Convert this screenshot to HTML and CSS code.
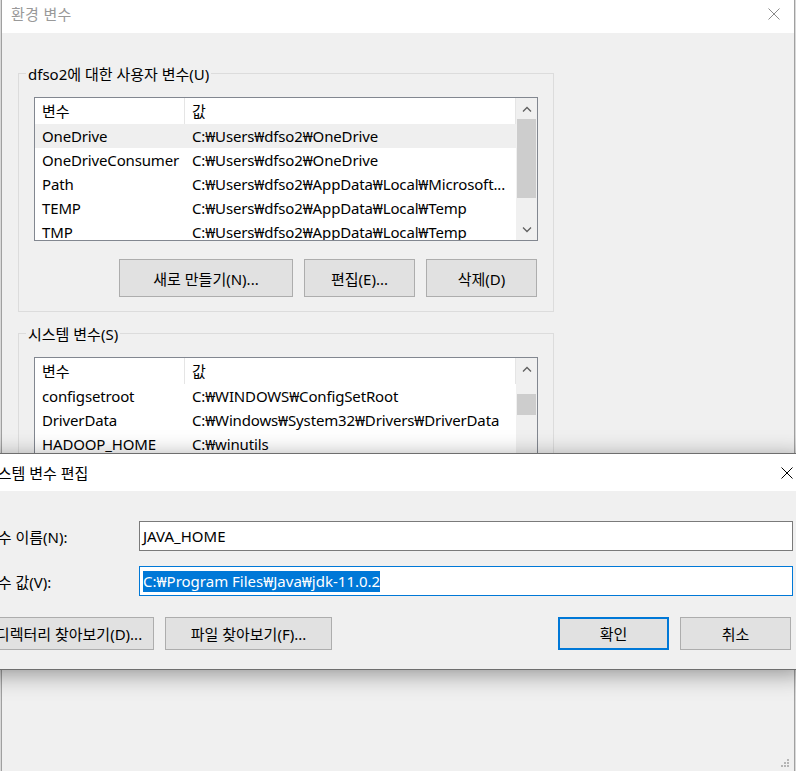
FILE: index.html
```html
<!DOCTYPE html>
<html lang="ko">
<head>
    <meta charset="UTF-8">
    <meta name="viewport" content="width=device-width, initial-scale=1.0">
    <title>환경 변수</title>
    <link rel="stylesheet" href="styles.css">
</head>
<body>
    <div class="env-window">
        <div class="titlebar inactive">
            <span class="title">환경 변수</span>
            <svg class="close" width="12" height="12" viewBox="0 0 12 12">
                <path d="M0.5 0.5 L11.5 11.5 M11.5 0.5 L0.5 11.5" stroke="#8a8a8a" stroke-width="1" fill="none"/>
            </svg>
        </div>

        <div class="env-body">
            <div class="group user-group">
                <span class="group-title">dfso2에 대한 사용자 변수(U)</span>
                <div class="listview user-list">
                    <div class="list-rows">
                        <div class="list-header">
                            <span class="col-name">변수</span>
                            <span class="col-value">값</span>
                        </div>
                        <div class="row selected"><span class="col-name">OneDrive</span><span class="col-value">C:₩Users₩dfso2₩OneDrive</span></div>
                        <div class="row"><span class="col-name">OneDriveConsumer</span><span class="col-value">C:₩Users₩dfso2₩OneDrive</span></div>
                        <div class="row"><span class="col-name">Path</span><span class="col-value">C:₩Users₩dfso2₩AppData₩Local₩Microsoft...</span></div>
                        <div class="row"><span class="col-name">TEMP</span><span class="col-value">C:₩Users₩dfso2₩AppData₩Local₩Temp</span></div>
                        <div class="row"><span class="col-name">TMP</span><span class="col-value">C:₩Users₩dfso2₩AppData₩Local₩Temp</span></div>
                    </div>
                    <div class="scrollbar">
                        <div class="arrow">
                            <svg width="10" height="6" viewBox="0 0 10 6"><path d="M1 5.5 L5 1.5 L9 5.5" stroke="#606060" stroke-width="1.3" fill="none"/></svg>
                        </div>
                        <div class="track"><div class="thumb user-thumb"></div></div>
                        <div class="arrow">
                            <svg width="10" height="6" viewBox="0 0 10 6"><path d="M1 0.5 L5 4.5 L9 0.5" stroke="#606060" stroke-width="1.3" fill="none"/></svg>
                        </div>
                    </div>
                </div>
                <div class="button-row">
                    <button class="btn btn-wide">새로 만들기(N)...</button>
                    <button class="btn">편집(E)...</button>
                    <button class="btn">삭제(D)</button>
                </div>
            </div>

            <div class="group system-group">
                <span class="group-title">시스템 변수(S)</span>
                <div class="listview system-list">
                    <div class="list-rows">
                        <div class="list-header">
                            <span class="col-name">변수</span>
                            <span class="col-value">값</span>
                        </div>
                        <div class="row"><span class="col-name">configsetroot</span><span class="col-value">C:₩WINDOWS₩ConfigSetRoot</span></div>
                        <div class="row"><span class="col-name">DriverData</span><span class="col-value">C:₩Windows₩System32₩Drivers₩DriverData</span></div>
                        <div class="row"><span class="col-name">HADOOP_HOME</span><span class="col-value">C:₩winutils</span></div>
                    </div>
                    <div class="scrollbar">
                        <div class="arrow">
                            <svg width="10" height="6" viewBox="0 0 10 6"><path d="M1 5.5 L5 1.5 L9 5.5" stroke="#606060" stroke-width="1.3" fill="none"/></svg>
                        </div>
                        <div class="track"><div class="thumb system-thumb"></div></div>
                    </div>
                </div>
            </div>
        </div>

        <svg class="grip" width="10" height="10" viewBox="0 0 10 10">
            <rect x="7" y="0" width="2" height="2" fill="#b5b5b5"/>
            <rect x="4" y="3" width="2" height="2" fill="#b5b5b5"/>
            <rect x="7" y="3" width="2" height="2" fill="#b5b5b5"/>
            <rect x="1" y="6" width="2" height="2" fill="#b5b5b5"/>
            <rect x="4" y="6" width="2" height="2" fill="#b5b5b5"/>
            <rect x="7" y="6" width="2" height="2" fill="#b5b5b5"/>
        </svg>
    </div>

    <!-- 시스템 변수 편집 대화 상자 -->
    <div class="edit-dialog">
        <div class="titlebar dialog-titlebar">
            <span class="title">시스템 변수 편집</span>
            <svg class="close" width="12" height="12" viewBox="0 0 12 12">
                <path d="M0.5 0.5 L11.5 11.5 M11.5 0.5 L0.5 11.5" stroke="#000" stroke-width="1" fill="none"/>
            </svg>
        </div>
        <div class="dialog-body">
            <div class="field-row">
                <label class="field-label">변수 이름(N):</label>
                <div class="text-input">JAVA_HOME</div>
            </div>
            <div class="field-row">
                <label class="field-label">변수 값(V):</label>
                <div class="text-input focused"><span class="selection">C:₩Program Files₩Java₩jdk-11.0.2</span></div>
            </div>
            <div class="dialog-buttons">
                <button class="btn btn-dir">디렉터리 찾아보기(D)...</button>
                <button class="btn btn-file">파일 찾아보기(F)...</button>
                <button class="btn btn-ok">확인</button>
                <button class="btn">취소</button>
            </div>
        </div>
    </div>
</body>
</html>
```

FILE: styles.css
```css
/* 창 공통 */
body {
    margin: 0;
    width: 796px;
    height: 771px;
    overflow: hidden;
    position: relative;
    background-color: #d9d9d9;
    font-family: "Noto Sans", "Noto Sans CJK KR", sans-serif;
    font-size: 15px;
    color: #000000;
}
.env-window {
    margin-left: 1px;
    width: 794px;
    height: 771px;
    box-sizing: border-box;
    border-left: 1px solid #a0a0a0;
    border-right: 1px solid #a0a0a0;
    background-color: #f0f0f0;
    position: relative;
}
.titlebar {
    display: flex;
    background-color: #ffffff;
}
.titlebar.inactive {
    height: 33px;
    align-items: flex-start;
    padding: 4px 0 0 9px;
    box-sizing: border-box;
}
.titlebar.inactive .title {
    color: #999999;
    line-height: 20px;
    letter-spacing: 0.3px;
}
.titlebar.inactive .close {
    margin: 4px 14px 0 auto;
}

/* 그룹 상자 */
.env-body {
    padding: 40px 0 0 16px;
}
.group {
    width: 536px;
    box-sizing: border-box;
    border: 1px solid #dcdcdc;
    padding: 0 15px 14px 15px;
}
.system-group {
    margin-top: 21px;
    height: 260px;
}
.group-title {
    display: block;
    width: fit-content;
    margin: -10px 0 0 -8px;
    padding: 0 2px;
    line-height: 20px;
    background-color: #f0f0f0;
}

/* 목록 */
.listview {
    margin-top: 13px;
    width: 504px;
    box-sizing: border-box;
    border: 1px solid #828790;
    background-color: #ffffff;
    display: flex;
    overflow: hidden;
}
.user-list {
    height: 144px;
}
.system-list {
    height: 200px;
}
.list-rows {
    width: 481px;
    letter-spacing: -0.15px;
}
.list-header {
    height: 26px;
    line-height: 26px;
    display: flex;
    border-right: 1px solid #e5e5e5;
}
.list-header .col-name {
    border-right: 1px solid #e5e5e5;
}
.row {
    height: 24px;
    line-height: 24px;
    display: flex;
    white-space: nowrap;
}
.row.selected {
    background-color: #efefef;
}
.col-name {
    width: 150px;
    padding-left: 7px;
    box-sizing: border-box;
    flex-shrink: 0;
}
.col-value {
    padding-left: 7px;
}
.scrollbar {
    width: 21px;
    background-color: #f0f0f0;
    display: flex;
    flex-direction: column;
}
.arrow {
    height: 21px;
    display: flex;
    align-items: center;
    justify-content: center;
    flex-shrink: 0;
}
.track {
    flex-grow: 1;
    padding: 0 1px;
}
.thumb {
    background-color: #cdcdcd;
}
.user-thumb {
    height: 79px;
}
.system-thumb {
    margin-top: 15px;
    height: 21px;
}

/* 버튼 */
.button-row {
    margin-top: 18px;
    display: flex;
    justify-content: flex-end;
    gap: 11px;
    padding-right: 1px;
}
.btn {
    height: 38px;
    width: 111px;
    padding: 0;
    background-color: #e1e1e1;
    border: 1px solid #adadad;
    font-family: inherit;
    font-size: 15px;
    color: #000000;
}
.btn-wide {
    width: 174px;
}

/* 크기 조정 손잡이 */
.grip {
    position: absolute;
    right: 4px;
    bottom: 2px;
}

/* 편집 대화 상자 */
.edit-dialog {
    position: absolute;
    left: -28px;
    top: 453px;
    width: 833px;
    box-sizing: border-box;
    border: 1px solid #6e6e6e;
    background-color: #f0f0f0;
    box-shadow: 0 4px 22px rgba(0, 0, 0, 0.4);
}
.dialog-titlebar {
    height: 37px;
    align-items: center;
    padding: 0 11px;
}
.dialog-titlebar .close {
    margin-left: auto;
}
.dialog-body {
    height: 178px;
    box-sizing: border-box;
    padding: 30px 11px 0 11px;
}
.field-row {
    display: flex;
    align-items: center;
    margin-bottom: 15px;
}
.field-label {
    width: 155px;
    flex-shrink: 0;
}
.text-input {
    flex-grow: 1;
    height: 30px;
    box-sizing: border-box;
    border: 1px solid #7a7a7a;
    background-color: #ffffff;
    padding-left: 3px;
    line-height: 28px;
    white-space: nowrap;
}
.text-input.focused {
    border-color: #0078d7;
}
.selection {
    background-color: #0078d7;
    color: #ffffff;
    display: inline-block;
    line-height: 21px;
}
.dialog-buttons {
    margin-top: 21px;
    display: flex;
    gap: 11px;
    padding-right: 2px;
}
.dialog-buttons .btn {
    height: 33px;
}
.btn-dir {
    width: 170px;
}
.btn-file {
    width: 167px;
    margin-right: auto;
}
.btn-ok {
    border: 2px solid #0078d7;
}
```
